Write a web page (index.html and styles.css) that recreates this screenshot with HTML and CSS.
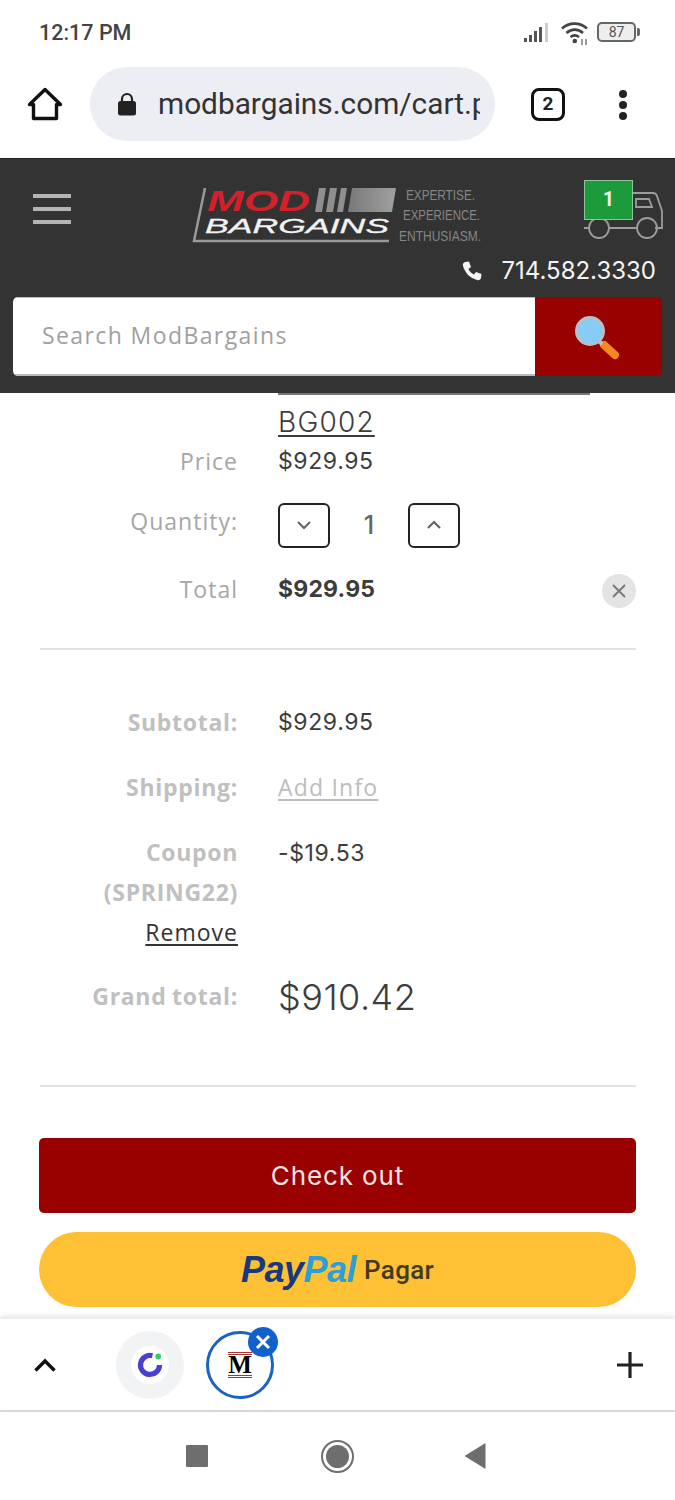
FILE: index.html
```html
<!DOCTYPE html>
<html lang="en">
<head>
<meta charset="utf-8">
<title>ModBargains cart</title>
<link rel="stylesheet" href="styles.css">
</head>
<body>
<div class="page">
  <div class="status">
    <span class="time">12:17 PM</span>
    <div class="status-icons">
      <svg class="sig" width="26" height="20" viewBox="0 0 26 20"><g fill="#555"><rect x="0" y="15" width="3" height="4"/><rect x="5" y="12" width="3" height="7"/><rect x="10" y="8" width="3" height="11"/><rect x="15" y="4" width="3" height="15"/></g><rect x="21" y="0" width="3" height="19" fill="#ccc"/></svg>
      <svg class="wifi" width="32" height="26" viewBox="0 0 32 26"><g fill="none" stroke="#444" stroke-width="2.6"><path d="M2 8.500C9 2 20 2 27 8.500"/><path d="M6.500 13C11.500 8.500 18 8.500 23 13"/><path d="M10.500 17C13 15 16.500 15 19 17"/></g><circle cx="14.800" cy="21" r="2.300" fill="#444"/><path d="M22 25v-6M26 25v-6" stroke="#666" stroke-width="1.300"/></svg>
      <div class="batt"><div class="batt-body">87</div><div class="batt-tip"></div></div>
    </div>
  </div>

  <div class="toolbar">
    <svg class="home" width="36" height="34" viewBox="0 0 36 34"><path d="M18 2.500L2.500 17.500H6.500V31.500H29.500V17.500H33.500Z" fill="none" stroke="#111" stroke-width="3.400" stroke-linejoin="round"/></svg>
    <div class="omni">
      <svg width="20" height="24" viewBox="0 0 20 24"><path d="M5 10V7a5 5 0 0 1 10 0v3" fill="none" stroke="#222" stroke-width="2.200"/><rect x="1" y="9" width="18" height="14.500" rx="2.500" fill="#222"/></svg>
      <span class="url"><span>modbargains.com/cart.php</span></span>
    </div>
    <div class="tabs">2</div>
    <div class="dots"><i></i><i></i><i></i></div>
  </div>

  <header class="site">
    <div class="site-top">
      <div class="burger"><i></i><i></i><i></i></div>
      <svg class="logo" width="292" height="60" viewBox="0 0 292 60">
        <defs><linearGradient id="lg" x1="0" x2="1" y1="0" y2="0"><stop offset="0" stop-color="#787878"/><stop offset="1" stop-color="#a0a0a0"/></linearGradient></defs>
        <path d="M13 3L2 56H197" fill="none" stroke="#999" stroke-width="2.500"/>
        <text x="15" y="26" class="logo-mod" textLength="103" lengthAdjust="spacingAndGlyphs">MOD</text>
        <g fill="#8f8f8f"><path d="M127 3h7l-4 24h-7z"/><path d="M138 3h7l-4 24h-7z"/><path d="M149 3h6l-4 24h-6z"/></g>
        <path d="M160 3H204L200 27H156Z" fill="url(#lg)"/>
        <text x="13" y="48" class="logo-bar" textLength="184" lengthAdjust="spacingAndGlyphs">BARGAINS</text>
        <g class="logo-tag">
          <text x="214" y="15" textLength="69" lengthAdjust="spacingAndGlyphs">EXPERTISE.</text>
          <text x="211" y="35" textLength="77" lengthAdjust="spacingAndGlyphs">EXPERIENCE.</text>
          <text x="207" y="56" textLength="82" lengthAdjust="spacingAndGlyphs">ENTHUSIASM.</text>
        </g>
      </svg>
      <div class="truck">
        <svg width="80" height="60" viewBox="0 0 80 60"><g fill="none" stroke="#9c9c9c" stroke-width="1.800"><path d="M49 13H69Q72 13 73 16L78 31V48H71"/><path d="M52 19H65L68 27H52Z"/><circle cx="15" cy="48" r="10"/><circle cx="63" cy="48" r="10"/><path d="M0 48H5M25 48H53"/></g></svg>
        <div class="truck-box">1</div>
      </div>
    </div>
    <div class="phone">
      <svg width="20" height="20" viewBox="0 0 20 20"><path d="M3 1L7 0.500L9 6L6.500 8C7.500 10.500 9.500 12.500 12 13.500L14 11L19.500 13L19 17C18.500 19 16.500 19.500 15 19C8 17 3 12 1 5C0.500 3.500 1 1.500 3 1Z" fill="#f4f4f4"/></svg>
      <span>714.582.3330</span>
    </div>
    <div class="search">
      <div class="search-field">Search ModBargains</div>
      <div class="search-btn">
        <svg width="48" height="48" viewBox="0 0 48 48"><path d="M31 31L42 41" stroke="#f08a1d" stroke-width="8" stroke-linecap="round"/><path d="M24 25L29 30" stroke="#b9c3cc" stroke-width="4"/><circle cx="17" cy="17" r="13.500" fill="#86cdf5" stroke="#b5c0c9" stroke-width="3"/></svg>
      </div>
    </div>
  </header>

  <main class="content">
    <div class="clip-line"></div>
    <div class="row row-link"><div class="label"></div><div class="value"><a class="u">BG002</a></div></div>
    <div class="row"><div class="label">Price</div><div class="value">$929.95</div></div>
    <div class="row row-qty">
      <div class="label">Quantity:</div>
      <div class="qty">
        <div class="qty-btn"><svg width="16" height="10" viewBox="0 0 16 10"><path d="M2 2L8 8L14 2" fill="none" stroke="#666" stroke-width="2.200"/></svg></div>
        <div class="qty-num">1</div>
        <div class="qty-btn"><svg width="16" height="10" viewBox="0 0 16 10"><path d="M2 8L8 2L14 8" fill="none" stroke="#666" stroke-width="2.200"/></svg></div>
      </div>
    </div>
    <div class="row row-total">
      <div class="label">Total</div><div class="value strong">$929.95</div>
      <div class="remove-x"><svg width="14" height="14" viewBox="0 0 14 14"><path d="M1 1L13 13M13 1L1 13" stroke="#777" stroke-width="1.800"/></svg></div>
    </div>
    <hr class="rule rule-1">
    <div class="summary">
      <div class="row s-first"><div class="label b">Subtotal:</div><div class="value">$929.95</div></div>
      <div class="row s-next"><div class="label b">Shipping:</div><div class="value"><a class="u add">Add Info</a></div></div>
      <div class="row s-next">
        <div class="label b up">Coupon<br>(SPRING22)<br><a class="u rem">Remove</a></div>
        <div class="value">-$19.53</div>
      </div>
      <div class="row s-next"><div class="label b up grand-label">Grand total:</div><div class="value grand">$910.42</div></div>
    </div>
    <hr class="rule rule-2">
    <button class="checkout">Check out</button>
    <button class="paypal"><span class="pp"><span class="pp-a">Pay</span><span class="pp-b">Pal</span></span><span class="pagar">Pagar</span></button>
  </main>

  <div class="tabbar">
    <svg class="chev" width="24" height="16" viewBox="0 0 24 16"><path d="M2.500 13.500L12 4L21.500 13.500" fill="none" stroke="#111" stroke-width="3.400"/></svg>
    <div class="tab-a">
      <svg width="38" height="38" viewBox="0 0 40 40"><path d="M22.500 10.300A10 10 0 1 0 30 20" fill="none" stroke="#4a3fd0" stroke-width="5.500"/><circle cx="28.600" cy="11" r="3" fill="#2fce6f"/></svg>
    </div>
    <div class="tab-b">
      <div class="m-logo">M</div>
      <div class="tab-close"><svg width="16" height="16" viewBox="0 0 16 16"><path d="M2 2L14 14M14 2L2 14" stroke="#fff" stroke-width="3"/></svg></div>
    </div>
    <svg class="plus" width="28" height="28" viewBox="0 0 28 28"><path d="M14 1V27M1 14H27" stroke="#222" stroke-width="3.200"/></svg>
  </div>

  <nav class="sysnav">
    <div class="nav-sq"></div>
    <div class="nav-ci"><i></i></div>
    <svg width="22" height="26" viewBox="0 0 22 26"><path d="M21.500 0V26L0.500 13Z" fill="#6e6e6e"/></svg>
  </nav>
</div>
</body>
</html>
```
FILE: styles.css
```css
* { box-sizing: border-box; }
html, body { margin: 0; padding: 0; background: #fff; }
.page { width: 675px; height: 1500px; overflow: hidden; display: flex; flex-direction: column; font-family: "Inter", "Liberation Sans", sans-serif; color: #333; }

.status { height: 67px; flex: none; display: flex; justify-content: space-between; align-items: flex-start; padding: 19px 35px 0 39px; }
.time { font: 500 21.500px/28px Roboto, sans-serif; color: #444; }
.status-icons { display: flex; align-items: flex-start; }
.sig { margin-top: 4px; }
.wifi { margin: 1px 0 0 10px; }
.batt { display: flex; align-items: center; margin: 3px 0 0 5px; }
.batt-body { width: 39px; height: 20px; border: 2px solid #666; border-radius: 5px; font: 400 14px/16px Roboto, sans-serif; text-align: center; color: #555; background: #eee; }
.batt-tip { width: 3px; height: 8px; background: #666; margin-left: 1px; border-radius: 0 2px 2px 0; }

.toolbar { height: 91px; flex: none; display: flex; align-items: flex-start; padding-left: 27px; }
.home { margin-top: 20px; }
.omni { width: 405px; height: 74px; margin-left: 27px; border-radius: 37px; background: #eceef3; display: flex; align-items: center; padding-left: 27px; }
.url { display: block; width: 322px; margin-left: 21px; overflow: hidden; white-space: nowrap; font: 400 29.800px/36px Roboto, sans-serif; color: #333; }
.tabs { width: 34px; height: 33px; margin: 21px 0 0 36px; border: 3.500px solid #111; border-radius: 8px; font: 700 19px/26px Roboto, sans-serif; text-align: center; color: #222; }
.dots { margin: 23px 0 0 54px; display: flex; flex-direction: column; gap: 3px; }
.dots i { width: 8px; height: 8px; border-radius: 50%; background: #222; display: block; }

.site { height: 235px; flex: none; background: #333; padding: 0 13px; border-top: 1px solid #222; }
.site-top { height: 91px; display: flex; align-items: flex-start; position: relative; }
.burger { width: 39px; margin: 35px 0 0 20px; display: flex; flex-direction: column; gap: 9px; }
.burger i { display: block; height: 4px; background: #b4b4b4; }
.logo { margin: 26px 0 0 121px; overflow: visible; }
.logo-mod { font: italic 700 30px "Liberation Sans", sans-serif; fill: #d3202a; }
.logo-bar { font: italic 400 20px "Liberation Sans", sans-serif; fill: #f2f2f2; stroke: #f2f2f2; stroke-width: 0.300px; }
.logo-tag text { font: 400 14px "Liberation Sans Narrow", "Liberation Sans", sans-serif; fill: #858585; }
.truck { position: relative; width: 80px; height: 60px; margin: 21px 0 0 100px; }
.truck svg { position: absolute; left: 0; top: 0; }
.truck-box { position: absolute; left: 0; top: 0; width: 49px; height: 40px; background: #1d9a3c; border: 1px solid #8fc79d; color: #eee; font: 700 20px/36px Roboto, sans-serif; text-align: center; }
.phone { height: 47px; padding-bottom: 6px; display: flex; justify-content: flex-end; align-items: center; gap: 19px; padding-right: 6px; color: #f4f4f4; font: 400 24px/30px "Inter", sans-serif; }
.search { height: 79px; display: flex; border-radius: 5px; overflow: hidden; }
.search-field { flex: 1; background: #fff; border-top: 1px solid #bbb; border-bottom: 2px solid #bbb; padding-left: 29px; font: 400 23px/75px "Open Sans", sans-serif; letter-spacing: 1.400px; color: #a0a0a0; }
.search-btn { width: 127px; background: #990000; display: flex; align-items: center; justify-content: center; padding-top: 2px; padding-right: 4px; }

.content { flex: 1; min-height: 0; overflow: hidden; padding: 0 39px 0 40px; font-size: 23px; }
.clip-line { height: 2px; width: 312px; margin: 0 0 1px 238px; background: #777; }
.row { display: grid; grid-template-columns: 198px 1fr; column-gap: 40px; line-height: 40px; position: relative; }
.label { text-align: right; color: #a6a6a6; font-family: "Open Sans", sans-serif; font-size: 23px; letter-spacing: 1px; }
.label.b { font-weight: 700; color: #c0c0c0; letter-spacing: 0.700px; }
.label.up { margin-top: -1px; }
.grand-label { word-spacing: -1px; }
.value { color: #3c3c3c; font-size: 23px; letter-spacing: 0.600px; font-weight: 400; }
.u { text-decoration: underline; text-underline-offset: 3px; color: inherit; }
.row-link { margin-top: 8px; line-height: 38px; }
.row-link .value { font-size: 28px; font-weight: 300; letter-spacing: 1.200px; }
.row-qty { margin-top: 22px; line-height: 36px; }
.qty { display: flex; align-items: center; height: 44px; }
.qty-btn { width: 52px; height: 45px; border: 2px solid #222; border-radius: 6px; display: flex; align-items: center; justify-content: center; }
.qty-num { width: 78px; text-align: center; font-weight: 500; color: #666; font-size: 25px; }
.row-total { margin-top: 22px; }
.value.strong { font-weight: 700; letter-spacing: 0.200px; }
.remove-x { position: absolute; right: 0; top: 5px; width: 34px; height: 34px; border-radius: 50%; background: #e4e4e4; display: flex; align-items: center; justify-content: center; }
.rule { border: 0; height: 2px; margin: 0; background: #e2e2e2; }
.rule-1 { margin-top: 39px; }
.s-first { margin-top: 52px; }
.s-next { margin-top: 25px; }
.add { color: #bdbdbd; letter-spacing: 1.200px; font-family: "Open Sans", sans-serif; }
.rem { color: #333; font-weight: 400; letter-spacing: 1px; }
.value.grand { font-size: 36px; font-weight: 300; letter-spacing: 0.500px; }
.rule-2 { margin-top: 68px; }
button { display: block; width: calc(100% + 1px); margin-left: -1px; border: 0; height: 75px; padding: 0; }
.checkout { margin-top: 51px; background: #990000; color: #f3e3e3; border-radius: 5px; font: 400 26px/1 "Inter", sans-serif; letter-spacing: 0.900px; }
.paypal { margin-top: 19px; background: #fec136; border-radius: 38px; display: flex; align-items: center; justify-content: center; gap: 8px; }
.pp { font: italic 700 36px/1 "Liberation Sans", sans-serif; letter-spacing: -0.500px; }
.pp-a { color: #163a7d; }
.pp-b { color: #2a9fd8; }
.pagar { font: 500 26px/1 Roboto, sans-serif; letter-spacing: 0.300px; color: #443a1c; }

.tabbar { height: 93px; flex: none; display: flex; align-items: center; position: relative; background: #fff; border-bottom: 2px solid #d8d8d8; box-shadow: 0 -3px 6px rgba(0,0,0,0.10); padding-left: 33px; }
.tab-a { width: 68px; height: 68px; margin-left: 59px; border-radius: 50%; background: #f1f3f5; display: flex; align-items: center; justify-content: center; }
.tab-a svg { background: #fff; border-radius: 50%; }
.tab-b { width: 68px; height: 68px; margin-left: 22px; border-radius: 50%; border: 3.500px solid #1a63c4; position: relative; display: flex; align-items: center; justify-content: center; }
.m-logo { width: 24px; height: 26px; border-top: 3px double #a33; border-bottom: 3px double #a33; font: 700 25px/20px "Liberation Serif", serif; color: #000; text-align: center; }
.tab-close { position: absolute; right: -7px; top: -7px; width: 30px; height: 30px; border-radius: 50%; background: #1160cc; display: flex; align-items: center; justify-content: center; }
.plus { margin-left: auto; margin-right: 31px; }

.sysnav { flex: none; height: 88px; display: flex; align-items: center; padding: 0 0 0 186px; }
.nav-sq { width: 22px; height: 22px; background: #6e6e6e; border-radius: 1px; }
.nav-ci { width: 33px; height: 33px; margin-left: 113px; border-radius: 50%; border: 2.500px solid #6e6e6e; padding: 3px; }
.nav-ci i { display: block; width: 100%; height: 100%; border-radius: 50%; background: #6e6e6e; }
.sysnav svg { margin-left: 110px; }
```
